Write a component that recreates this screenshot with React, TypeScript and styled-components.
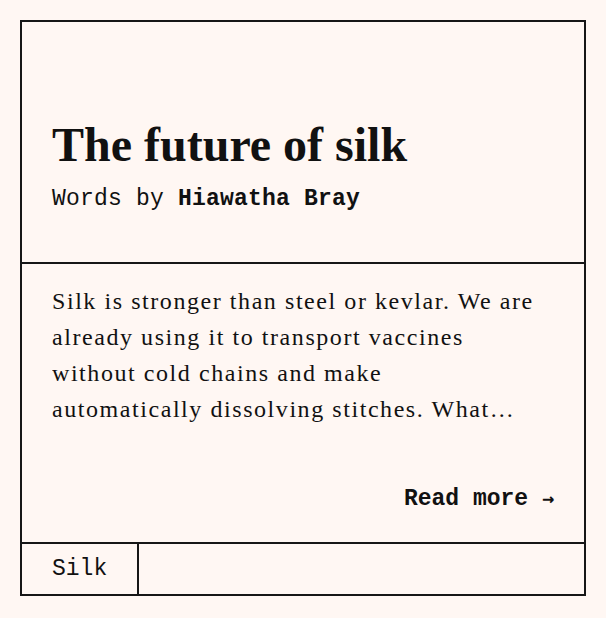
import React from "react";
import styled, { createGlobalStyle } from "styled-components";

const Global = createGlobalStyle`
  html, body { margin: 0; padding: 0; background: #fff7f3; }
  body { padding: 20px; }
  * { box-sizing: border-box; }
`;

const Card = styled.article`
  width: 566px;
  border: 2px solid #161616;
  background: #fff7f3;
  color: #111;
  display: flex;
  flex-direction: column;
`;

const Header = styled.header`
  height: 242px;
  border-bottom: 2px solid #161616;
  padding: 0 30px 46px;
  display: flex;
  flex-direction: column;
  justify-content: flex-end;
`;

const Title = styled.h2`
  margin: 0 0 10px;
  font-family: "Liberation Serif", serif;
  font-weight: 700;
  font-size: 48px;
  line-height: 1.1;
`;

const Byline = styled.p`
  margin: 0;
  font-family: "Liberation Mono", monospace;
  font-size: 23px;
  line-height: 1.5;
  letter-spacing: 0.2px;
  font-weight: 400;
  strong { font-weight: 700; }
`;

const Body = styled.section`
  height: 280px;
  border-bottom: 2px solid #161616;
  padding: 19px 30px 26px;
  display: flex;
  flex-direction: column;
  justify-content: space-between;
`;

const Excerpt = styled.p`
  margin: 0;
  max-width: 484px;
  font-family: "Liberation Serif", serif;
  font-size: 24px;
  line-height: 36px;
  letter-spacing: 1.56px;
  word-spacing: 0;
  display: -webkit-box;
  -webkit-line-clamp: 4;
  -webkit-box-orient: vertical;
  overflow: hidden;
`;

const ReadMore = styled.a`
  align-self: flex-end;
  font-family: "Liberation Mono", "DejaVu Sans Mono", monospace;
  font-weight: 700;
  font-size: 23px;
  line-height: 1.5;
  color: #111;
  text-decoration: none;
`;

const Arrow = styled.span`
  font-family: "DejaVu Sans Mono", monospace;
  font-weight: 700;
  font-size: 20px;
`;

const Footer = styled.footer`
  height: 50px;
  display: flex;
`;

const Tag = styled.span`
  display: flex;
  align-items: center;
  padding: 0 30px;
  border-right: 2px solid #161616;
  font-family: "Liberation Mono", monospace;
  font-size: 23px;
`;

export default function App() {
  return (
    <>
      <Global />
      <Card>
        <Header>
          <Title>The future of silk</Title>
          <Byline>
            Words by <strong>Hiawatha Bray</strong>
          </Byline>
        </Header>
        <Body>
          <Excerpt>
            Silk is stronger than steel or kevlar. We are already using it to
            transport vaccines without cold chains and make automatically
            dissolving stitches. What else could we do with it?
          </Excerpt>
          <ReadMore href="#">
            Read more <Arrow>→</Arrow>
          </ReadMore>
        </Body>
        <Footer>
          <Tag>Silk</Tag>
        </Footer>
      </Card>
    </>
  );
}
